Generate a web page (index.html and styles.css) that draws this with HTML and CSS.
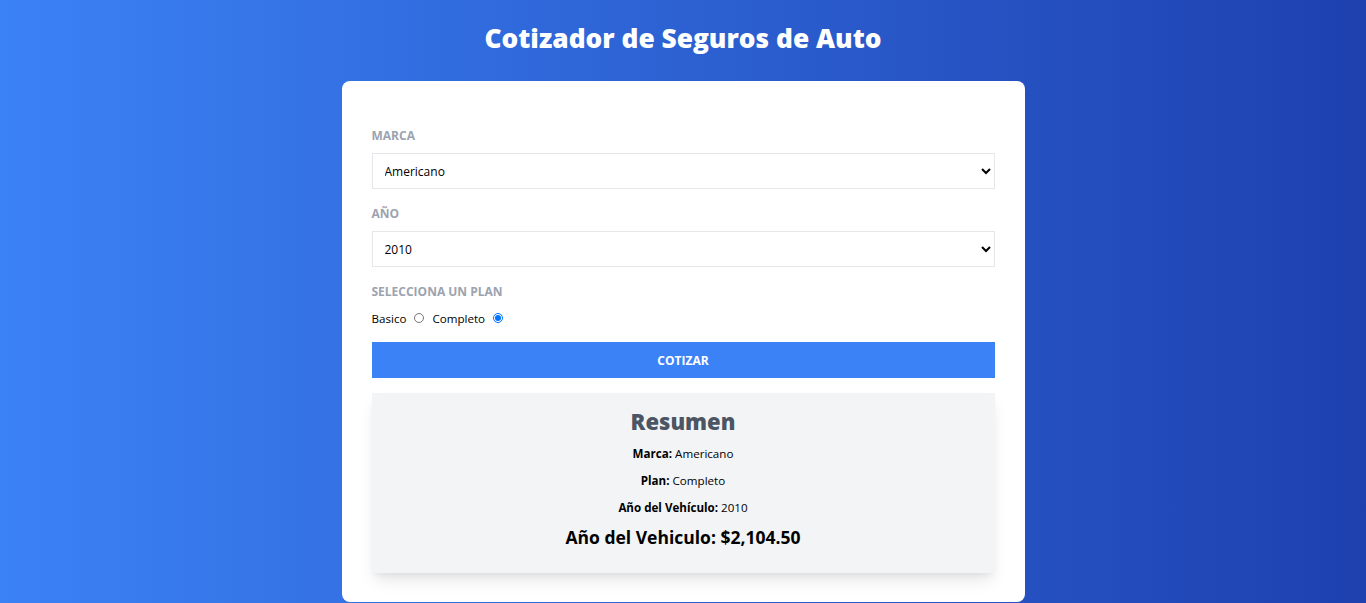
FILE: index.html
```html
<!DOCTYPE html>
<html lang="es">
<head>
<meta charset="utf-8">
<title>Cotizador de Seguros de Auto</title>
<link rel="stylesheet" href="styles.css">
</head>
<body>
  <header class="header">
    <h1 class="title">Cotizador de Seguros de Auto</h1>
  </header>
  <main class="card">
    <form class="form">
      <div class="field">
        <label class="label" for="marca">Marca</label>
        <select id="marca" class="select">
          <option>Americano</option>
          <option>Europeo</option>
          <option>Asiatico</option>
        </select>
      </div>
      <div class="field">
        <label class="label" for="year">Año</label>
        <select id="year" class="select">
          <option>2010</option>
          <option>2011</option>
        </select>
      </div>
      <div class="field">
        <span class="label">Selecciona un Plan</span>
        <div class="radios">
          <label class="radio-label" for="basico">Basico</label>
          <input class="radio" type="radio" id="basico" name="plan">
          <label class="radio-label" for="completo">Completo</label>
          <input class="radio" type="radio" id="completo" name="plan" checked>
        </div>
      </div>
      <button type="button" class="button">Cotizar</button>
    </form>
    <section class="summary">
      <h2 class="summary-title">Resumen</h2>
      <p class="summary-line"><strong>Marca:</strong> Americano</p>
      <p class="summary-line"><strong>Plan:</strong> Completo</p>
      <p class="summary-line"><strong>Año del Vehículo:</strong> 2010</p>
      <p class="summary-total">Año del Vehiculo: $2,104.50</p>
    </section>
  </main>
</body>
</html>
```

FILE: styles.css
```css
* { box-sizing: border-box; }

html, body { height: 100%; }

body {
  margin: 0;
  font-family: "Open Sans", "Noto Sans", "Liberation Sans", sans-serif;
  background: linear-gradient(to right, #3b82f6, #1e40af);
  color: #000;
  overflow: hidden;
}

.header {
  padding-top: 20px;
  margin-bottom: 25px;
}

.title {
  margin: 0;
  text-align: center;
  color: #fff;
  font-size: 26.3px;
  line-height: 36px;
  font-weight: 800;
}

.card {
  width: 683px;
  margin: 0 auto;
  background: #fff;
  border-radius: 8px;
  padding: 47px 30px 29px;
}

.form {
  display: flex;
  flex-direction: column;
}

.field {
  display: flex;
  flex-direction: column;
  margin-bottom: 17px;
}

.label {
  display: block;
  font-size: 12px;
  line-height: 16px;
  font-weight: 700;
  color: #9ca3af;
  text-transform: uppercase;
  margin-bottom: 9px;
}

.select {
  width: 100%;
  height: 36px;
  border: 1px solid #e5e7eb;
  background: #fff;
  padding: 0 8px;
  font-family: inherit;
  font-size: 12px;
  color: #000;
  border-radius: 0;
}

.radios {
  display: flex;
  align-items: center;
  height: 16px;
  margin-top: 1px;
  font-size: 11.6px;
}

.radio-label { margin-right: 4px; }

.radio {
  width: 10px;
  height: 10px;
  margin: 0 8px 0 4px;
}

.button {
  height: 36px;
  border: 0;
  background: #3b82f6;
  color: #fff;
  font-family: inherit;
  font-weight: 700;
  font-size: 12px;
  text-transform: uppercase;
  margin-top: -1px;
}

.summary {
  margin-top: 15px;
  background: #f3f4f6;
  box-shadow: 0 10px 15px -3px rgba(0,0,0,0.1), 0 4px 6px -2px rgba(0,0,0,0.05);
  padding: 12px 0 22px;
  text-align: center;
}

.summary-title {
  margin: 0 0 3px;
  font-size: 22px;
  line-height: 32px;
  font-weight: 800;
  color: #4b5563;
}

.summary-line {
  margin: 0;
  font-size: 11.6px;
  line-height: 27px;
}

.summary-total {
  margin: 2px 0 0;
  font-size: 17.5px;
  line-height: 28px;
  font-weight: 700;
}
```
